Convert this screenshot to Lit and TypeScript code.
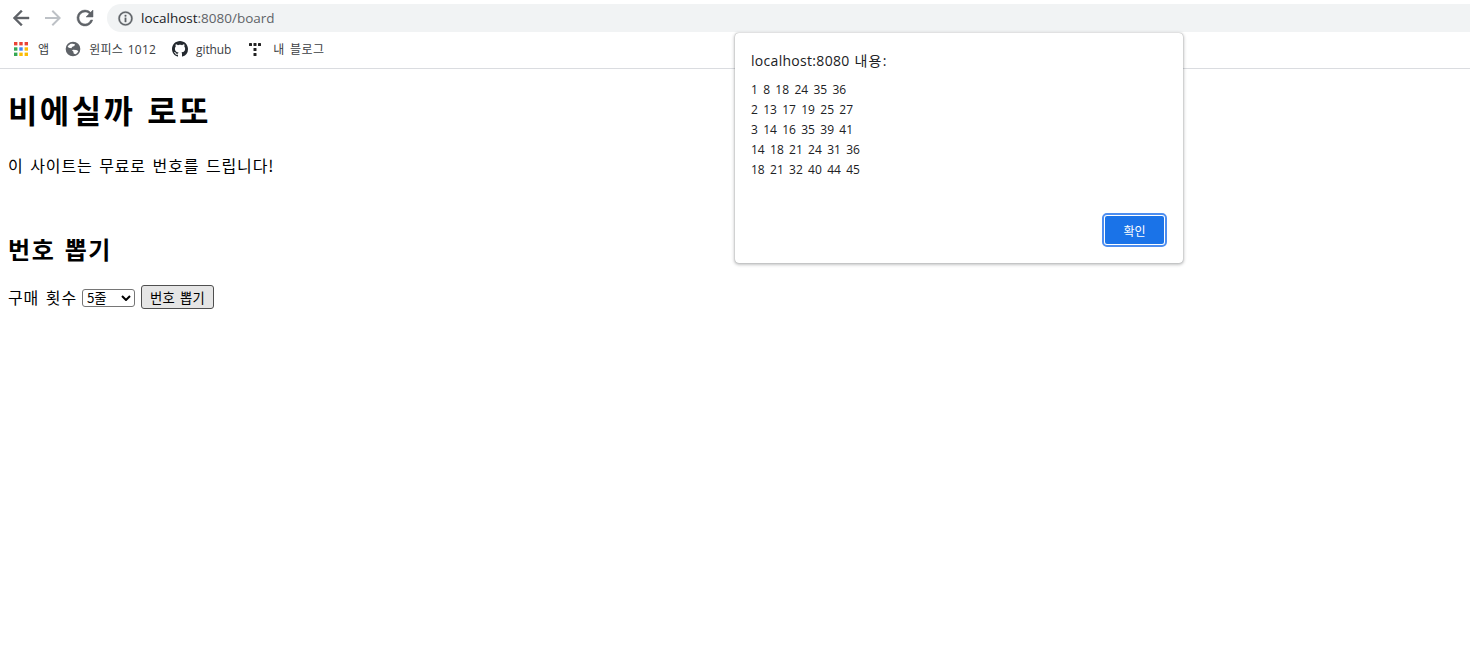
import { LitElement, html, css } from "lit";
import { customElement } from "lit/decorators.js";

const lines = ["1 8 18 24 35 36", "2 13 17 19 25 27", "3 14 16 35 39 41", "14 18 21 24 31 36", "18 21 32 40 44 45"];

@customElement("app-root")
export class AppRoot extends LitElement {
  static styles = css`
    :host { display: block; width: 1470px; height: 669px; position: relative; overflow: hidden; background: #fff; color: #000;
      font-family: "Noto Sans CJK KR", "Liberation Sans", sans-serif; }
    .chrome { height: 68px; border-bottom: 1px solid #dadce0; box-sizing: content-box; font-family: "Open Sans", "Noto Sans CJK KR", sans-serif; }
    .toolbar { height: 36px; display: flex; align-items: center; padding-left: 9px; gap: 8px; }
    .nav { width: 24px; height: 24px; display: block; }
    .omni { flex: 1; height: 28px; margin-left: 2px; background: #f1f3f4; border-radius: 14px 0 0 14px; display: flex; align-items: center; padding-left: 10px; gap: 7px; font-size: 13.5px; color: #5f6368; }
    .omni svg { width: 17px; height: 17px; display: block; }
    .omni b { font-weight: 400; color: #202124; }
    .bookmarks { height: 26px; display: flex; align-items: center; padding-left: 14px; font-size: 12px; color: #3c4043; word-spacing: 1.5px; letter-spacing: .2px; }
    .bm { display: flex; align-items: center; gap: 8px; margin-right: 16px; }
    .bm svg { display: block; width: 16px; height: 16px; }
    .bm.gh { letter-spacing: -.1px; margin-right: 17px; }
    .bm.blog { gap: 9px; letter-spacing: .5px; }
    main { padding: 0 8px; letter-spacing: .053em; word-spacing: .14em; }
    h1 { font-size: 32px; line-height: 46px; margin: 17px 0 0; font-weight: 700; letter-spacing: 2.4px; }
    p.sub { font-size: 16px; line-height: 24px; margin: 21px 0 0; }
    h2 { font-size: 24px; line-height: 35px; margin: 54px 0 0; font-weight: 700; letter-spacing: 1.6px; }
    form { margin-top: 19px; display: flex; align-items: center; font-size: 16px; height: 24px; }
    .sel { position: relative; display: block; width: 53px; height: 18px; margin: 2px 6px 0 5px; }
    .sel svg { position: absolute; right: 4px; top: 6px; width: 10px; height: 6px; pointer-events: none; }
    select { appearance: none; -webkit-appearance: none; display: block; width: 53px; height: 18px; font: 13.33px/16px "Noto Sans CJK KR", sans-serif; padding: 0 0 0 4px; background: #fff; border: 1px solid #767676; border-radius: 3px; box-sizing: border-box; letter-spacing: 0; color: #000; }
    .pick { width: 73px; height: 24px; font: 13.33px "Noto Sans CJK KR", sans-serif; padding: 0; background: #e5e5e5; border: 1px solid #4f4f4f; border-radius: 3px; color: #000; word-spacing: 2px; letter-spacing: .2px; }
    .dialog { position: absolute; left: 735px; top: 33px; width: 448px; height: 230px; box-sizing: border-box; background: #fff; border-radius: 4px; padding: 16px; box-shadow: 0 1px 3px 1px rgba(60,64,67,.3), 0 0 1px rgba(60,64,67,.5); display: flex; flex-direction: column; font-family: "Open Sans", "Noto Sans CJK KR", sans-serif; color: #202124; }
    .title { font-size: 14px; line-height: 24px; letter-spacing: .3px; word-spacing: 1px; }
    .title span { letter-spacing: 1.2px; }
    .msg { margin-top: 7px; font-size: 12px; line-height: 20px; word-spacing: 2.2px; }
    .msg div { white-space: pre; }
    .actions { margin-top: auto; display: flex; justify-content: flex-end; }
    .ok { width: 63px; height: 32px; box-sizing: border-box; margin: 0 1px 1px 0; background: #1a73e8; color: #fff; font: 12px "Noto Sans CJK KR", sans-serif; border: 2px solid #fff; outline: 2px solid #4d8ef0; outline-offset: -1px; border-radius: 4px; padding: 0; }
  `;

  render() {
    return html`
      <div class="chrome">
        <div class="toolbar">
          <svg class="nav" viewBox="0 0 24 24" fill="#5f6368" stroke="#5f6368" stroke-width=".4"><path d="M20 11H7.830l5.590-5.590L12 4l-8 8 8 8 1.410-1.410L7.830 13H20v-2z"/></svg>
          <svg class="nav" viewBox="0 0 24 24" fill="#bdc1c6"><path d="M4 11h12.170l-5.590-5.590L12 4l8 8-8 8-1.410-1.410L16.170 13H4v-2z"/></svg>
          <svg class="nav" viewBox="0 0 24 24" fill="#5f6368" stroke="#5f6368" stroke-width=".5"><path d="M17.650 6.350A7.960 7.960 0 0 0 12 4a8 8 0 1 0 7.730 10h-2.080A6 6 0 1 1 12 6c1.660 0 3.140.690 4.220 1.780L13 11h7V4l-2.350 2.350z"/></svg>
          <div class="omni">
            <svg viewBox="0 0 24 24" fill="#5f6368" stroke="#5f6368" stroke-width=".5"><path d="M11 7h2v2h-2zm0 4h2v6h-2zm1-9a10 10 0 1 0 0 20 10 10 0 0 0 0-20zm0 18a8 8 0 1 1 0-16 8 8 0 0 1 0 16z"/></svg>
            <span><b>localhost</b>:8080/board</span>
          </div>
        </div>
        <div class="bookmarks">
          <span class="bm"><svg viewBox="0 0 16 16"><rect x="0" y="1" width="3.400" height="3.400" fill="#ea4335"/><rect x="5.300" y="1" width="3.400" height="3.400" fill="#ea4335"/><rect x="10.600" y="1" width="3.400" height="3.400" fill="#ea4335"/><rect x="0" y="6.300" width="3.400" height="3.400" fill="#34a853"/><rect x="5.300" y="6.300" width="3.400" height="3.400" fill="#4285f4"/><rect x="10.600" y="6.300" width="3.400" height="3.400" fill="#fbbc04"/><rect x="0" y="11.600" width="3.400" height="3.400" fill="#34a853"/><rect x="5.300" y="11.600" width="3.400" height="3.400" fill="#fbbc04"/><rect x="10.600" y="11.600" width="3.400" height="3.400" fill="#fbbc04"/></svg>앱</span>
          <span class="bm"><svg viewBox="0 0 24 24" fill="#5f6368"><path fill-rule="evenodd" d="M12 1a11 11 0 1 0 0 22 11 11 0 0 0 0-22zM8 4.500c2 -.8 5 -.8 7 .5l-1 2.500-3 1 -1.500 2.500 -4 -1 -1.500-2zM12 13l5 .5 3 1.500c-.6 2-2.600 4-4.500 4.800l-2.500-1-.5-3-2-1.500z"/></svg>윈피스 1012</span>
          <span class="bm gh"><svg viewBox="0 0 16 16" fill="#24292f"><path d="M8 0C3.580 0 0 3.580 0 8c0 3.540 2.290 6.530 5.470 7.590.4.070.55-.17.55-.38 0-.19-.01-.82-.01-1.490-2.010.37-2.530-.49-2.690-.94-.09-.23-.48-.94-.82-1.130-.28-.15-.68-.52-.01-.53.63-.01 1.080.58 1.230.82.72 1.210 1.870.87 2.330.66.07-.52.28-.87.51-1.070-1.780-.2-3.640-.89-3.640-3.950 0-.87.31-1.590.82-2.150-.08-.2-.36-1.020.08-2.120 0 0 .67-.21 2.200.82.64-.18 1.320-.27 2-.27s1.360.09 2 .27c1.530-1.040 2.200-.82 2.200-.82.44 1.100.16 1.920.08 2.120.51.56.82 1.270.82 2.150 0 3.070-1.870 3.750-3.650 3.950.29.25.54.73.54 1.480 0 1.070-.01 1.930-.01 2.200 0 .21.15.46.55.38A8.010 8.010 0 0 0 16 8c0-4.420-3.580-8-8-8z"/></svg>github</span>
          <span class="bm blog"><svg viewBox="0 0 16 16" fill="#222"><rect x="1" y="2" width="3" height="3" rx=".6"/><rect x="5.500" y="2" width="3" height="3" rx=".6"/><rect x="10" y="2" width="3" height="3" rx=".6"/><rect x="5.500" y="7" width="3" height="3" rx=".6"/><rect x="5.500" y="12" width="3" height="3" rx=".6"/></svg>내 블로그</span>
        </div>
      </div>
      <main>
        <h1>비에실까 로또</h1>
        <p class="sub">이 사이트는 무료로 번호를 드립니다!</p>
        <h2>번호 뽑기</h2>
        <form>구매 횟수 <span class="sel"><select><option>5줄</option></select><svg viewBox="0 0 10 6"><path d="M1 1l4 4 4-4" fill="none" stroke="#000" stroke-width="2"/></svg></span><button class="pick" type="button">번호 뽑기</button></form>
      </main>
      <div class="dialog">
        <div class="title">localhost:8080 <span>내용:</span></div>
        <div class="msg">${lines.map((l) => html`<div>${l}</div>`)}</div>
        <div class="actions"><button class="ok" type="button">확인</button></div>
      </div>
    `;
  }
}
